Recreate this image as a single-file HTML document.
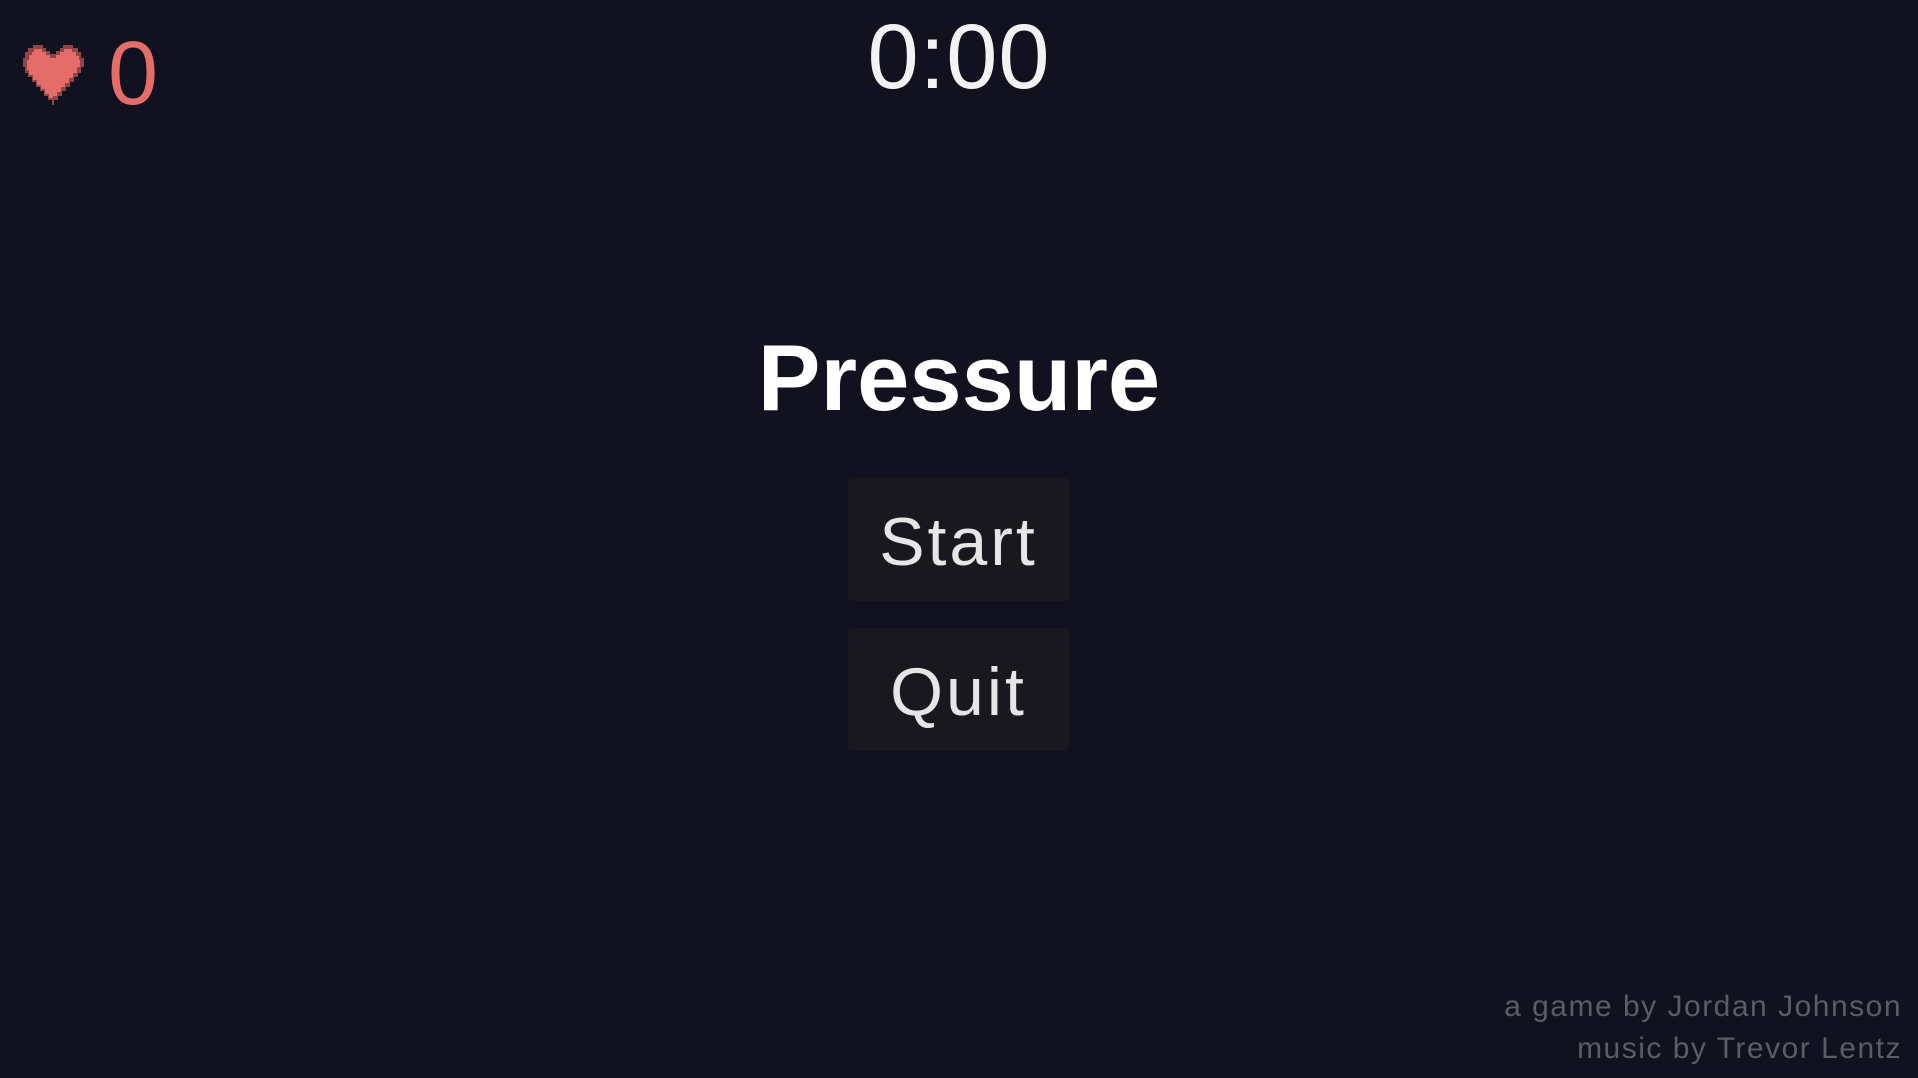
<!DOCTYPE html>
<html><head><meta charset="utf-8"><style>
html,body{margin:0;padding:0;width:1918px;height:1078px;background:#11111f;overflow:hidden;font-family:"Liberation Sans",sans-serif;}
.t{position:absolute;white-space:nowrap;line-height:1;}
.btn{position:absolute;left:848px;width:221px;height:123px;background:#18181e;border-radius:4px;color:#e6e6e6;font-size:68px;font-weight:300;text-align:center;letter-spacing:3px;}
</style></head><body>
<svg style="position:absolute;left:23px;top:45px" width="61" height="60" viewBox="0 0 61 60">
<path d="M10 0 H20 V3 H23 V6 H27 V9 H33 V6 H37 V3 H40 V0 H50 V3 H55 V7 H58 V13 H61 V22 H58 V28 H55 V32 H51 V37 H47 V42 H43 V46 H39 V51 H35 V55 H31 V60 H29 V55 H25 V51 H21 V46 H17 V42 H13 V37 H9 V32 H5 V28 H2 V22 H0 V13 H2 V7 H5 V3 H10 Z" fill="#8f4447"/>
<path d="M11 4 H19 V7 H23 V10 H27 V13 H33 V10 H37 V7 H41 V4 H49 V7 H53 V11 H56 V15 H57 V22 H54 V28 H50 V33 H46 V38 H42 V42 H38 V47 H34 V51 H30 V53 H26 V49 H22 V44 H18 V40 H14 V35 H10 V30 H6 V25 H4 V15 H6 V10 H9 V7 H11 Z" fill="#e46d69"/>
</svg>
<div class="t" style="left:108px;top:29px;font-size:90px;font-weight:300;color:#e46d69;">0</div>
<div class="t" style="left:0;width:1918px;text-align:center;top:11px;font-size:92px;font-weight:300;color:#f2f2f2;letter-spacing:1px;">0:00</div>
<div class="t" style="left:0;width:1918px;text-align:center;top:331px;font-size:94px;font-weight:700;color:#fff;">Pressure</div>
<div class="btn" style="top:478px;"><div style="padding-top:25px">Start</div></div>
<div class="btn" style="top:628px;"><div style="padding-top:25px">Quit</div></div>
<div class="t" style="right:16px;top:986px;font-size:30px;color:#5c5c66;text-align:right;line-height:42px;letter-spacing:1.5px;">a game by Jordan Johnson<br>music by Trevor Lentz</div>
</body></html>
